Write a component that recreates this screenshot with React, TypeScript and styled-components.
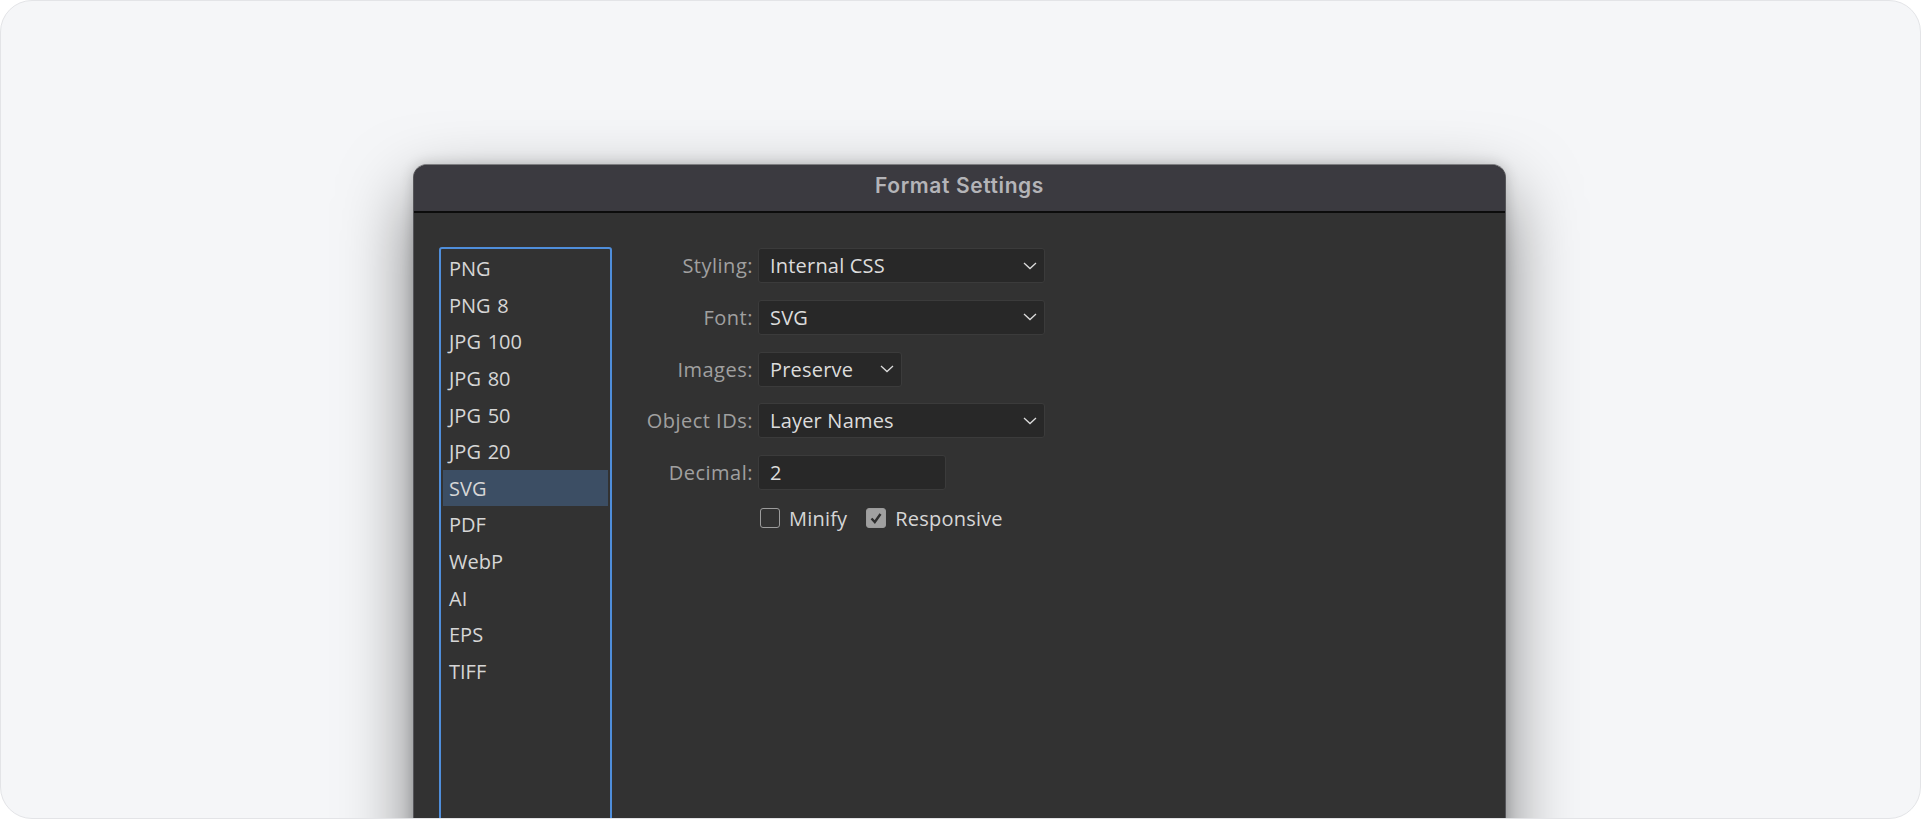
import React from 'react';
import styled, { createGlobalStyle } from 'styled-components';

const GlobalStyle = createGlobalStyle`
  html, body {
    margin: 0;
    padding: 0;
    background: #ffffff;
  }
  * {
    box-sizing: border-box;
  }
`;

const Frame = styled.div`
  width: 1921px;
  height: 819px;
  padding: 163px 0 0 412px;
  overflow: hidden;
  background: #f5f6f8;
  border: 1px solid #e3e4e7;
  border-radius: 32px;
`;

const Window = styled.div`
  width: 1093px;
  height: 900px;
  background: #323232;
  border: 1px solid #56565a;
  border-top-color: #7d7d80;
  border-radius: 14px 14px 0 0;
  box-shadow: 0 30px 70px 0 rgba(0, 0, 0, 0.5), 0 0 14px rgba(0, 0, 0, 0.18);
  overflow: hidden;
`;

const TitleBar = styled.div`
  height: 48px;
  display: flex;
  align-items: center;
  justify-content: center;
  padding-bottom: 6px;
  background: #3b3a40;
  border-bottom: 2px solid #0c0c0c;
  font-family: Inter, sans-serif;
  font-size: 21px;
  font-weight: 600;
  letter-spacing: 0.6px;
  color: #b4b4b8;
`;

const Body = styled.div`
  display: flex;
  align-items: flex-start;
  padding: 34px 0 0 25px;
`;

const PresetList = styled.ul`
  width: 173px;
  height: 760px;
  margin: 0;
  padding: 1px 2px;
  list-style: none;
  border: 2px solid #4f8edb;
  border-radius: 3px;
`;

const Preset = styled.li<{ $selected?: boolean }>`
  height: 36.6px;
  display: flex;
  align-items: center;
  padding: 1px 0 0 6px;
  font-family: 'Open Sans', sans-serif;
  font-size: 20px;
  word-spacing: 1.5px;
  color: #d6d6d6;
  background: ${(props) => (props.$selected ? '#3c4e64' : 'transparent')};
`;

const Form = styled.div`
  margin-top: 1px;
  display: grid;
  grid-template-columns: 146px auto;
  grid-template-rows: repeat(5, 35px) 23px;
  row-gap: 16.75px;
  align-items: center;
  justify-items: start;
`;

const FieldLabel = styled.span`
  justify-self: end;
  padding-right: 5px;
  font-family: 'Open Sans', sans-serif;
  font-size: 20px;
  letter-spacing: 0.5px;
  color: #a0a0a0;
`;

const Control = styled.div<{ $width: number }>`
  width: ${(props) => props.$width}px;
  height: 35px;
  display: flex;
  align-items: center;
  justify-content: space-between;
  padding: 0 7px 0 11px;
  background: #282828;
  border: 1px solid #3b3b3b;
  border-radius: 3px;
  font-family: 'Open Sans', sans-serif;
  font-size: 20px;
  letter-spacing: 0.2px;
  color: #dcdcdc;
`;

const Chevron = styled.svg`
  width: 14px;
  height: 8px;
  fill: none;
  stroke: #dcdcdc;
  stroke-width: 1.3;
`;

const Options = styled.div`
  grid-column: 2;
  display: flex;
  align-items: center;
  gap: 19px;
  padding-left: 2px;
`;

const Option = styled.label`
  display: flex;
  align-items: center;
  gap: 9px;
  font-family: 'Open Sans', sans-serif;
  font-size: 20px;
  letter-spacing: 0.2px;
  color: #d6d6d6;
`;

const Checkbox = styled.span<{ $checked?: boolean }>`
  width: 20px;
  height: 20px;
  display: flex;
  align-items: center;
  justify-content: center;
  border: 1.5px solid #9c9c9c;
  border-radius: 3px;
  background: ${(props) => (props.$checked ? '#a0a0a0' : 'transparent')};
`;

const Check = styled.svg`
  width: 14px;
  height: 14px;
  fill: none;
  stroke: #2e2e2e;
  stroke-width: 2.4;
`;

const presets = ['PNG', 'PNG 8', 'JPG 100', 'JPG 80', 'JPG 50', 'JPG 20', 'SVG', 'PDF', 'WebP', 'AI', 'EPS', 'TIFF'];

const Select = ({ value, width }: { value: string; width: number }) => (
  <Control $width={width}>
    {value}
    <Chevron viewBox="0 0 14 8">
      <polyline points="1,1 7,6.5 13,1" />
    </Chevron>
  </Control>
);

export default function App() {
  return (
    <>
      <GlobalStyle />
      <Frame>
        <Window>
          <TitleBar>Format Settings</TitleBar>
          <Body>
            <PresetList>
              {presets.map((name) => (
                <Preset key={name} $selected={name === 'SVG'}>
                  {name}
                </Preset>
              ))}
            </PresetList>

            <Form>
              <FieldLabel>Styling:</FieldLabel>
              <Select value="Internal CSS" width={287} />

              <FieldLabel>Font:</FieldLabel>
              <Select value="SVG" width={287} />

              <FieldLabel>Images:</FieldLabel>
              <Select value="Preserve" width={144} />

              <FieldLabel>Object IDs:</FieldLabel>
              <Select value="Layer Names" width={287} />

              <FieldLabel>Decimal:</FieldLabel>
              <Control $width={188}>2</Control>

              <Options>
                <Option>
                  <Checkbox />
                  Minify
                </Option>
                <Option>
                  <Checkbox $checked>
                    <Check viewBox="0 0 14 14">
                      <polyline points="2.5,7.5 5.8,11 11.5,3" />
                    </Check>
                  </Checkbox>
                  Responsive
                </Option>
              </Options>
            </Form>
          </Body>
        </Window>
      </Frame>
    </>
  );
}
